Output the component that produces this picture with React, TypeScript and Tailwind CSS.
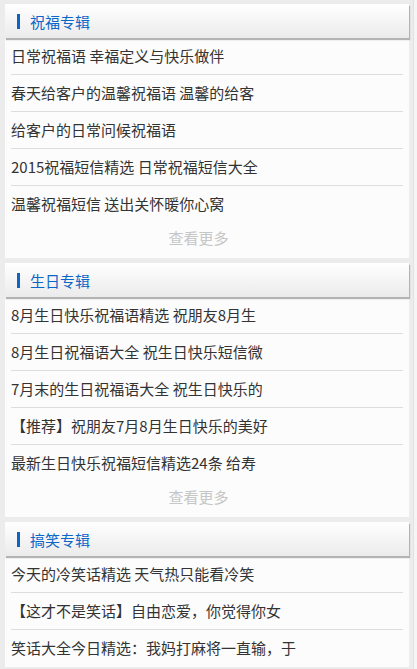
import React from 'react';

const sections = [
  {
    title: '祝福专辑',
    items: [
      '日常祝福语 幸福定义与快乐做伴',
      '春天给客户的温馨祝福语 温馨的给客',
      '给客户的日常问候祝福语',
      '2015祝福短信精选 日常祝福短信大全',
      '温馨祝福短信 送出关怀暖你心窝',
    ],
    more: true,
  },
  {
    title: '生日专辑',
    items: [
      '8月生日快乐祝福语精选 祝朋友8月生',
      '8月生日祝福语大全 祝生日快乐短信微',
      '7月末的生日祝福语大全 祝生日快乐的',
      '【推荐】祝朋友7月8月生日快乐的美好',
      '最新生日快乐祝福短信精选24条 给寿',
    ],
    more: true,
  },
  {
    title: '搞笑专辑',
    items: [
      '今天的冷笑话精选 天气热只能看冷笑',
      '【这才不是笑话】自由恋爱，你觉得你女',
      '笑话大全今日精选：我妈打麻将一直输，于',
    ],
    more: false,
  },
];

const App: React.FC = () => {
  return (
    <div
      className="flex min-h-[669px] bg-[#ececec]"
      style={{ fontFamily: '"Noto Sans CJK SC", "Noto Sans", sans-serif' }}
    >
      <div className="flex-1 pl-[5px] pr-[4px] pt-[4px] flex flex-col gap-[5px]">
        {sections.map((sec, i) => (
          <div key={i} className="bg-[#fcfcfc]">
            {/* Header */}
            <div className="relative z-10 h-[34px] flex items-center bg-gradient-to-b from-white to-[#ebebeb] shadow-[1px_2px_1px_#b3b3b3]">
              <span className="ml-[12px] w-[3px] h-[15px] bg-[#0b64c6]"></span>
              <span className="ml-[10px] text-[15px] leading-none text-[#0b66c8]">{sec.title}</span>
            </div>

            {/* Items */}
            <div className="px-[6px]">
              {sec.items.map((item, j) => (
                <div
                  key={j}
                  className={`flex items-center text-[15px] text-[#333] whitespace-nowrap overflow-hidden ${
                    j < sec.items.length - 1 ? 'h-[37px] border-b border-[#dddddd]' : 'h-[37px]'
                  }`}
                >
                  {item}
                </div>
              ))}
            </div>

            {sec.more && (
              <div className="h-[35px] leading-[30px] text-center pr-[17px] text-[15px] text-[#c6c6c6]">
                查看更多
              </div>
            )}
          </div>
        ))}
      </div>
      <div className="w-[4px] bg-[#f5f5f5] border-l border-[#e2e2e2]"></div>
    </div>
  );
};

export default App;
